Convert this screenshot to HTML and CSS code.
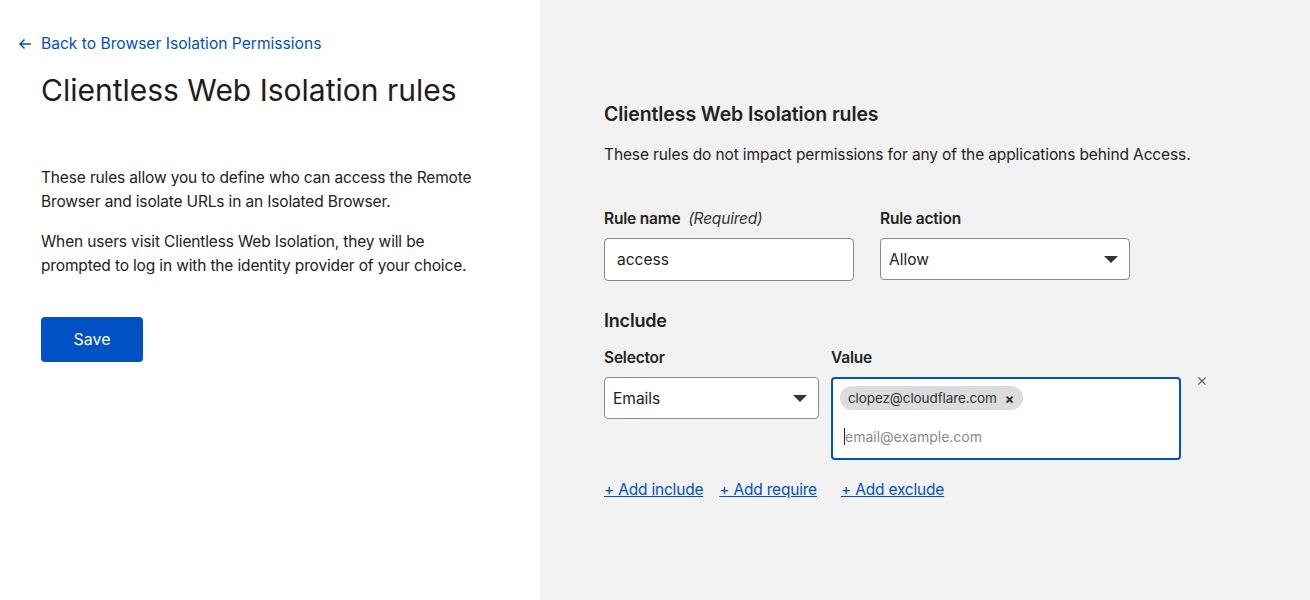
FILE: index.html
```html
<!DOCTYPE html>
<html lang="en">
<head>
<meta charset="utf-8">
<title>Clientless Web Isolation rules</title>
<link rel="stylesheet" href="styles.css">
</head>
<body>
<div class="page">
  <aside class="left">
    <a class="back" href="#">
      <svg class="back-arrow" width="14" height="12" viewBox="0 0 14 12" aria-hidden="true"><path d="M13 6H2M6.5 1.5L2 6l4.5 4.5" fill="none" stroke="currentColor" stroke-width="1.5"/></svg>
      <span>Back to Browser Isolation Permissions</span>
    </a>
    <h1 class="title">Clientless Web Isolation rules</h1>
    <div class="intro">
      <p>These rules allow you to define who can access the Remote Browser and isolate URLs in an Isolated Browser.</p>
      <p>When users visit Clientless Web Isolation, they will be prompted to log in with the identity provider of your choice.</p>
    </div>
    <button class="save">Save</button>
  </aside>
  <main class="right">
    <h2 class="section-title">Clientless Web Isolation rules</h2>
    <p class="section-desc">These rules do not impact permissions for any of the applications behind Access.</p>
    <div class="row top-row">
      <div class="field name-field">
        <label class="label">Rule name <em class="req">(Required)</em></label>
        <div class="input">access</div>
      </div>
      <div class="field action-field">
        <label class="label">Rule action</label>
        <div class="select"><span>Allow</span><span class="caret"></span></div>
      </div>
    </div>
    <h3 class="include-title">Include</h3>
    <div class="row include-row">
      <div class="field selector-field">
        <label class="label">Selector</label>
        <div class="select sel-emails"><span>Emails</span><span class="caret"></span></div>
      </div>
      <div class="field value-field">
        <label class="label">Value</label>
        <div class="multi">
          <span class="chip">clopez@cloudflare.com <span class="chip-x">×</span></span>
          <div class="placeholder"><span class="cursor"></span>email@example.com</div>
        </div>
      </div>
      <button class="remove">×</button>
    </div>
    <div class="links">
      <a href="#">+ Add include</a>
      <a href="#" class="req-link">+ Add require</a>
      <a href="#">+ Add exclude</a>
    </div>
  </main>
</div>
</body>
</html>
```

FILE: styles.css
```css
* { box-sizing: border-box; }
html, body { margin: 0; padding: 0; }
body {
  font-family: Inter, "Liberation Sans", Arial, sans-serif;
  color: #222;
  font-size: 16px;
  background: #fff;
}
.page {
  display: flex;
  width: 1310px;
  height: 600px;
}
.left {
  width: 540px;
  background: #fff;
  padding: 34px 0 0 41px;
}
.back {
  display: flex;
  align-items: center;
  gap: 9px;
  margin-left: -23px;
  color: #0051c3;
  text-decoration: none;
  font-size: 15.6px;
  line-height: 20px;
}
.back-arrow { display: block; }
.title {
  margin: 16px 0 0 0;
  font-size: 30px;
  font-weight: 400;
  line-height: 40px;
  color: #1d1d1d;
  letter-spacing: 0;
}
.intro {
  margin-top: 56px;
  width: 450px;
}
.intro p {
  margin: 0 0 16px 0;
  font-size: 15.5px;
  line-height: 24px;
  color: #222;
  letter-spacing: -0.15px;
}
.save {
  margin-top: 23px;
  width: 102px;
  height: 45px;
  background: #0051c3;
  color: #fff;
  border: none;
  border-radius: 4px;
  font-family: inherit;
  font-size: 16px;
  padding: 0 0 2px 0;
}
.right {
  flex: 1;
  background: #f2f2f2;
  padding: 102px 0 0 64px;
}
.section-title {
  margin: 0;
  font-size: 19.5px;
  font-weight: 600;
  line-height: 24px;
  color: #222;
  letter-spacing: -0.1px;
}
.section-desc {
  margin: 17px 0 0 0;
  font-size: 15.5px;
  line-height: 24px;
  letter-spacing: -0.12px;
}
.row { display: flex; }
.top-row { margin-top: 40px; gap: 26px; }
.field { display: flex; flex-direction: column; }
.label {
  font-size: 15.5px;
  font-weight: 600;
  line-height: 24px;
  color: #222;
  letter-spacing: -0.2px;
}
.req { font-weight: 400; font-style: italic; margin-left: 4px; color: #333; }
.input, .select {
  margin-top: 7px;
  background: #fff;
  border: 1px solid #8a8a8a;
  border-radius: 4px;
  display: flex;
  align-items: center;
  font-size: 15.5px;
}
.input {
  width: 250px;
  height: 43px;
  padding: 0 12px;
}
.select {
  width: 250px;
  height: 42px;
  padding: 0 11px 0 8px;
  justify-content: space-between;
}
.caret {
  width: 0; height: 0;
  border-left: 7px solid transparent;
  border-right: 7px solid transparent;
  border-top: 7px solid #333;
}
.include-title {
  margin: 28px 0 0 0;
  font-size: 18px;
  font-weight: 600;
  line-height: 24px;
  letter-spacing: -0.2px;
}
.include-row { margin-top: 13px; gap: 12px; align-items: flex-start; }
.sel-emails { width: 215px; }
.multi {
  margin-top: 7px;
  width: 350px;
  height: 83px;
  background: #fff;
  border: 2px solid #0051c3;
  border-radius: 4px;
  padding: 7px 7px;
}
.chip {
  display: inline-flex;
  align-items: center;
  height: 24px;
  padding: 0 9px 0 8px;
  background: #dcdcdc;
  border-radius: 12px;
  font-size: 13.5px;
  color: #333;
  letter-spacing: -0.1px;
}
.chip-x { margin-left: 8px; font-weight: 700; font-size: 14px; }
.placeholder {
  margin-top: 18px;
  padding-left: 4px;
  font-size: 14px;
  color: #8a8a8a;
  display: flex;
  align-items: center;
}
.cursor {
  display: inline-block;
  width: 1px;
  height: 17px;
  background: #222;
}
.remove {
  margin: 24px 0 0 3px;
  background: none;
  border: none;
  padding: 0;
  font-family: inherit;
  font-size: 18px;
  font-weight: 300;
  line-height: 20px;
  color: #555;
}
.links {
  margin-top: 18px;
  display: flex;
  gap: 16px;
}
.links a {
  color: #0051c3;
  font-size: 15.5px;
  line-height: 24px;
  letter-spacing: -0.2px;
}
.links .req-link { margin-right: 8px; }
```
